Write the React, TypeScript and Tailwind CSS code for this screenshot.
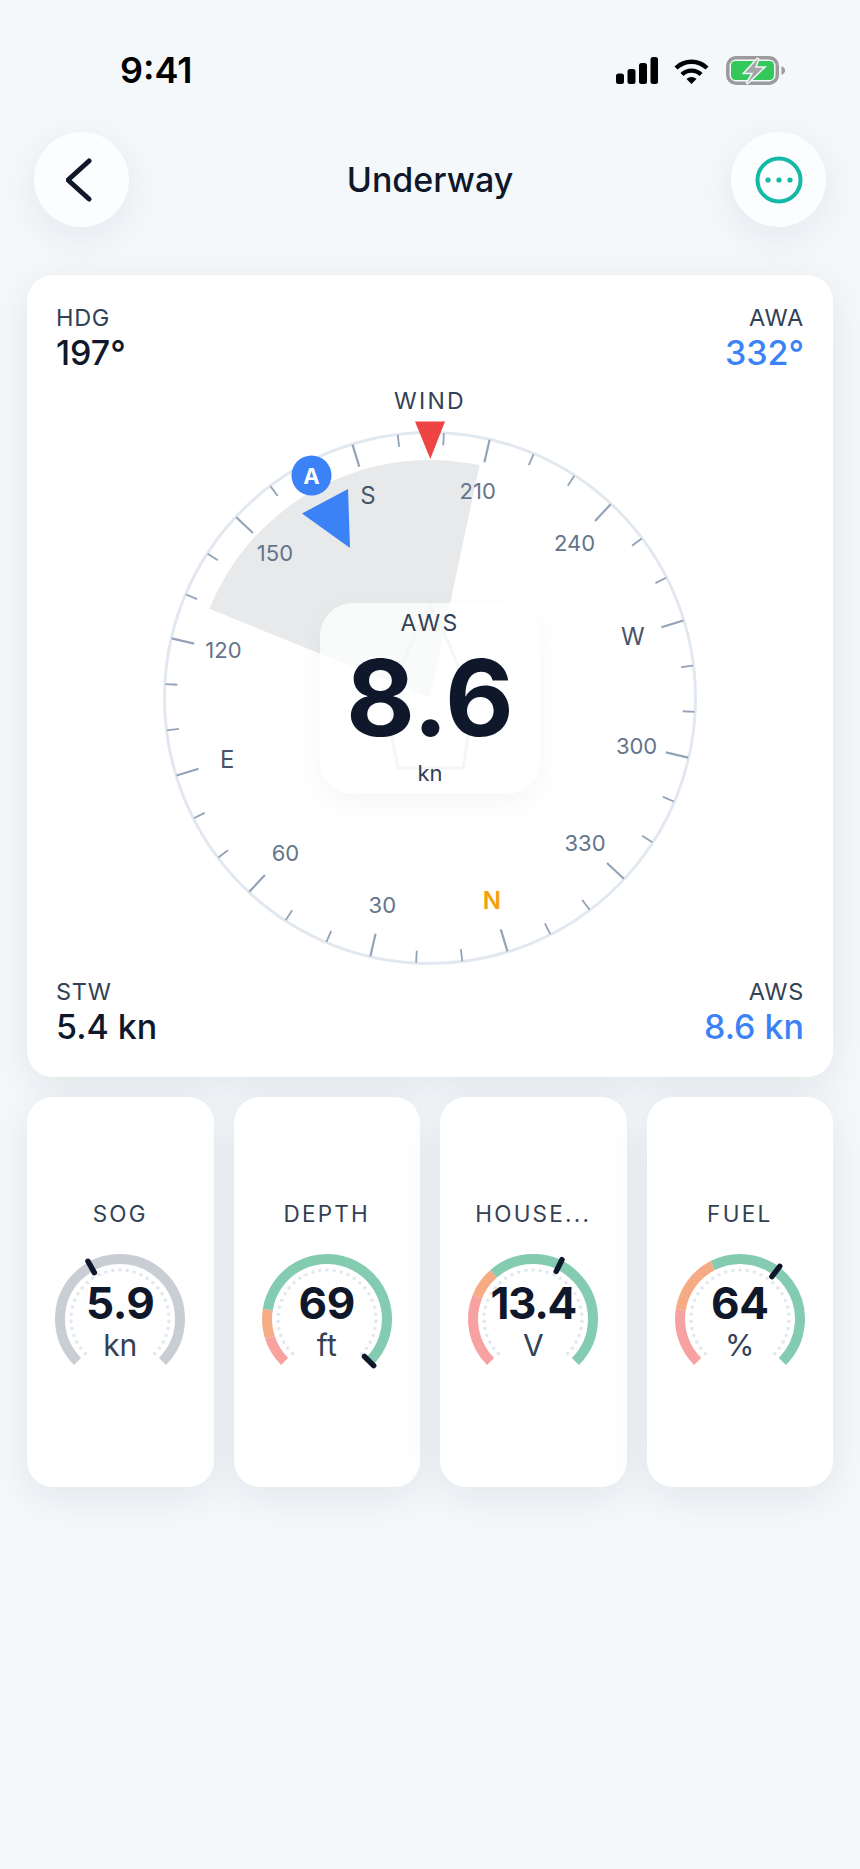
// File: App.tsx
import React from "react";

const polar = (cx: number, cy: number, r: number, deg: number) => {
  const a = (deg * Math.PI) / 180;
  return { x: cx + r * Math.sin(a), y: cy - r * Math.cos(a) };
};

const arcPath = (cx: number, cy: number, r: number, from: number, to: number) => {
  const s = polar(cx, cy, r, from);
  const e = polar(cx, cy, r, to);
  const large = to - from > 180 ? 1 : 0;
  return `M ${s.x} ${s.y} A ${r} ${r} 0 ${large} 1 ${e.x} ${e.y}`;
};

const HEADING = 197;
const CX = 430;
const CY = 698;

const compassLabels: { deg: number; text: string; className: string }[] = [
  { deg: 0, text: "N", className: "fill-[#f59e0b] text-[24px] font-semibold" },
  { deg: 30, text: "30", className: "fill-[#64748b] text-[22px]" },
  { deg: 60, text: "60", className: "fill-[#64748b] text-[22px]" },
  { deg: 90, text: "E", className: "fill-[#475569] text-[24px]" },
  { deg: 120, text: "120", className: "fill-[#64748b] text-[22px]" },
  { deg: 150, text: "150", className: "fill-[#64748b] text-[22px]" },
  { deg: 180, text: "S", className: "fill-[#475569] text-[24px]" },
  { deg: 210, text: "210", className: "fill-[#64748b] text-[22px]" },
  { deg: 240, text: "240", className: "fill-[#64748b] text-[22px]" },
  { deg: 270, text: "W", className: "fill-[#475569] text-[24px]" },
  { deg: 300, text: "300", className: "fill-[#64748b] text-[22px]" },
  { deg: 330, text: "330", className: "fill-[#64748b] text-[22px]" },
];

function Compass() {
  const ticks = Array.from({ length: 36 }, (_, i) => i * 10);
  const sectorA = polar(CX, CY, 238, -68);
  const sectorB = polar(CX, CY, 238, 12);
  return (
    <div className="relative h-[606px]">
      <svg width="748" height="606" viewBox="56 374 748 606" className="block">
        <path
          d={`M ${CX} ${CY} L ${sectorA.x} ${sectorA.y} A 238 238 0 0 1 ${sectorB.x} ${sectorB.y} Z`}
          fill="#e7e9ea"
        />
        <circle cx={CX} cy={CY} r={265.5} fill="none" stroke="#e2e8f0" strokeWidth="3" />
        {ticks.map((deg) => {
          const major = deg % 30 === 0;
          const p1 = polar(CX, CY, 265, deg - HEADING);
          const p2 = polar(CX, CY, major ? 242 : 253, deg - HEADING);
          return (
            <line
              key={deg}
              x1={p1.x}
              y1={p1.y}
              x2={p2.x}
              y2={p2.y}
              stroke="#94a3b8"
              strokeWidth={major ? 2.2 : 1.8}
            />
          );
        })}
        {compassLabels.map((l) => {
          const p = polar(CX, CY, 212, l.deg - HEADING);
          return (
            <text key={l.deg} x={p.x} y={p.y} textAnchor="middle" dominantBaseline="central" className={l.className}>
              {l.text}
            </text>
          );
        })}
        <text
          x={CX}
          y={401}
          textAnchor="middle"
          dominantBaseline="central"
          className="fill-[#334155] text-[23px] tracking-[0.1em]"
        >
          WIND
        </text>
        <polygon points="415,421.5 445,421.5 430.3,459" fill="#ef4444" />
        <polygon points="302,513.5 348,489 350,548" fill="#3b82f6" />
        <circle cx={311.5} cy={475.5} r={20} fill="#3b82f6" />
        <text
          x={311.5}
          y={476}
          textAnchor="middle"
          dominantBaseline="central"
          className="fill-white text-[22px] font-bold"
        >
          A
        </text>
        <path
          d="M 430 605 C 412 640 386 690 392 737 L 398 768 L 463 768 L 468 737 C 474 690 448 640 430 605 Z"
          fill="none"
          stroke="#d6dade"
          strokeWidth="3"
        />
      </svg>
      <div className="absolute left-[264px] top-[229px] flex h-[191px] w-[220px] flex-col items-center rounded-[33px] bg-white/75 pt-[3px] shadow-[0_10px_30px_rgba(15,23,42,0.04)]">
        <div className="text-[23px] leading-[34px] tracking-[0.1em] text-[#334155]">AWS</div>
        <div className="mt-[5px] text-[106px] font-bold leading-[106px] text-[#0f172a]">8.6</div>
        <div className="mt-[7px] text-[22px] leading-[30px] text-[#334155]">kn</div>
      </div>
    </div>
  );
}

function Stat({ label, value, blue, right }: { label: string; value: string; blue?: boolean; right?: boolean }) {
  return (
    <div className={right ? "text-right" : ""}>
      <div className="text-[23.5px] leading-[30px] tracking-[0.03em] text-[#334155]">{label}</div>
      <div className={`text-[34px] font-medium leading-[40px] ${blue ? "text-[#3b82f6]" : "text-[#0f172a]"}`}>{value}</div>
    </div>
  );
}

const GREEN = "#83cbb1";
const ORANGE = "#f5ab84";
const RED = "#f7a1a1";
const GREY = "#c9ced4";

type GaugeData = {
  label: string;
  value: string;
  valueClass: string;
  unit: string;
  needle: number;
  segments: { from: number; to: number; color: string }[];
};

const gauges: GaugeData[] = [
  {
    label: "SOG",
    value: "5.9",
    valueClass: "tracking-[-0.01em]",
    unit: "kn",
    needle: -29,
    segments: [{ from: -135, to: 135, color: GREY }],
  },
  {
    label: "DEPTH",
    value: "69",
    valueClass: "tracking-[-0.01em]",
    unit: "ft",
    needle: 135,
    segments: [
      { from: -135, to: -108, color: RED },
      { from: -108, to: -81, color: ORANGE },
      { from: -81, to: 135, color: GREEN },
    ],
  },
  {
    label: "HOUSE...",
    value: "13.4",
    valueClass: "tracking-[-0.03em]",
    unit: "V",
    needle: 26,
    segments: [
      { from: -135, to: -68, color: RED },
      { from: -68, to: -41, color: ORANGE },
      { from: -41, to: 135, color: GREEN },
    ],
  },
  {
    label: "FUEL",
    value: "64",
    valueClass: "tracking-[-0.01em]",
    unit: "%",
    needle: 37,
    segments: [
      { from: -135, to: -81, color: RED },
      { from: -81, to: -27, color: ORANGE },
      { from: -27, to: 135, color: GREEN },
    ],
  },
];

function Gauge({ data }: { data: GaugeData }) {
  const dots = Array.from({ length: 33 }, (_, i) => -135 + (i * 270) / 32);
  const n1 = polar(75, 75, 53, data.needle);
  const n2 = polar(75, 75, 66, data.needle);
  return (
    <div className="flex h-[390px] flex-col items-center rounded-[26px] bg-white pt-[102px] shadow-[0_10px_40px_rgba(15,23,42,0.08)]">
      <div className="h-[30px] text-[22.5px] leading-[30px] tracking-[0.1em] text-[#334155]">{data.label}</div>
      <div className="relative mt-[15px] h-[150px] w-[150px]">
        <svg width="150" height="150" viewBox="0 0 150 150" className="block">
          {dots.map((d) => {
            const p = polar(75, 75, 49, d);
            return <circle key={d} cx={p.x} cy={p.y} r={1.8} fill="#e2e8f0" />;
          })}
          {data.segments.map((s) => (
            <path key={s.from} d={arcPath(75, 75, 60, s.from, s.to)} fill="none" stroke={s.color} strokeWidth="10" />
          ))}
          <line x1={n1.x} y1={n1.y} x2={n2.x} y2={n2.y} stroke="#0f172a" strokeWidth="5.5" strokeLinecap="round" />
        </svg>
        <div className="absolute inset-0 flex flex-col items-center pt-[37px]">
          <div className={`text-[44px] font-bold leading-[44px] text-[#0f172a] ${data.valueClass}`}>{data.value}</div>
          <div className="text-[30px] leading-[40px] text-[#334155]">{data.unit}</div>
        </div>
      </div>
    </div>
  );
}

function StatusIcons() {
  return (
    <div className="flex translate-y-[1px] items-center">
      <svg width="42" height="28" viewBox="0 0 42 28" className="block">
        <rect x="0" y="16.5" width="8" height="10.5" rx="2.5" fill="#000" />
        <rect x="11.5" y="12" width="8" height="15" rx="2.5" fill="#000" />
        <rect x="23" y="6" width="8" height="21" rx="2.5" fill="#000" />
        <rect x="34.5" y="0" width="7.5" height="27" rx="2.5" fill="#000" />
      </svg>
      <svg width="35" height="26" viewBox="0 0 35 26" className="ml-[16px] block">
        <path d="M 2 10 A 22.5 22.5 0 0 1 33 10" fill="none" stroke="#000" strokeWidth="4.4" />
        <path d="M 8 16.5 A 13.5 13.5 0 0 1 27 16.5" fill="none" stroke="#000" strokeWidth="4.4" />
        <path d="M 12.5 21 A 7 7 0 0 1 22.5 21 L 17.5 26 Z" fill="#000" />
      </svg>
      <svg width="59" height="30" viewBox="0 0 59 30" className="ml-[17px] block">
        <rect x="1.8" y="1.8" width="49.5" height="25.4" rx="8" fill="none" stroke="#9b9b9b" strokeWidth="3.5" />
        <rect x="5" y="5" width="43" height="19" rx="4.5" fill="#34c759" />
        <path d="M 55.5 10 C 58 11 59 13 59 14.5 C 59 16 58 18 55.5 19 Z" fill="#9b9b9b" />
        <polygon
          points="32.3,2.3 19,16.7 27.3,16.7 20.7,27.7 37.3,11.7 29,11.7"
          fill="#a3a5a8"
          stroke="#f5f8fc"
          strokeWidth="3"
          paintOrder="stroke"
        />
      </svg>
    </div>
  );
}

export default function App() {
  return (
    <div className="min-h-[1869px] bg-[#f4f8fb] font-['Inter',sans-serif]">
      {/* status bar */}
      <div className="box-content flex h-[51px] items-center justify-between pl-[120px] pr-[75px] pt-[44px]">
        <span className="text-[36px] font-semibold leading-none text-black">9:41</span>
        <StatusIcons />
      </div>

      {/* nav */}
      <div className="mt-[37px] flex items-center justify-between px-[34px]">
        <button className="flex h-[95px] w-[95px] items-center justify-center rounded-full bg-[#fbfdfe] shadow-[0_10px_40px_rgba(15,23,42,0.07)]">
          <svg width="32" height="48" viewBox="0 0 32 48" className="block">
            <polyline points="23,5 2,24 23,43" fill="none" stroke="#111827" strokeWidth="5" strokeLinecap="round" strokeLinejoin="round" />
          </svg>
        </button>
        <h1 className="text-[34px] font-medium text-[#0f172a]">Underway</h1>
        <button className="flex h-[95px] w-[95px] items-center justify-center rounded-full bg-[#fbfdfe] shadow-[0_10px_40px_rgba(15,23,42,0.07)]">
          <svg width="48" height="48" viewBox="0 0 48 48" className="block">
            <circle cx="24" cy="24" r="21.5" fill="none" stroke="#14b8a6" strokeWidth="4" />
            <circle cx="13" cy="24" r="2.6" fill="#14b8a6" />
            <circle cx="24" cy="24" r="2.6" fill="#14b8a6" />
            <circle cx="35" cy="24" r="2.6" fill="#14b8a6" />
          </svg>
        </button>
      </div>

      {/* compass card */}
      <div className="mx-[27px] mt-[48px] h-[802px] rounded-[26px] bg-white px-[29px] pt-[28px] shadow-[0_10px_40px_rgba(15,23,42,0.08)]">
        <div className="flex h-[71px] justify-between">
          <Stat label="HDG" value="197°" />
          <Stat label="AWA" value="332°" blue right />
        </div>
        <Compass />
        <div className="-mt-[3px] flex justify-between">
          <Stat label="STW" value="5.4 kn" />
          <Stat label="AWS" value="8.6 kn" blue right />
        </div>
      </div>

      {/* gauges */}
      <div className="mx-[27px] mt-[20px] grid grid-cols-4 gap-[20px]">
        {gauges.map((g) => (
          <Gauge key={g.label} data={g} />
        ))}
      </div>
    </div>
  );
}
